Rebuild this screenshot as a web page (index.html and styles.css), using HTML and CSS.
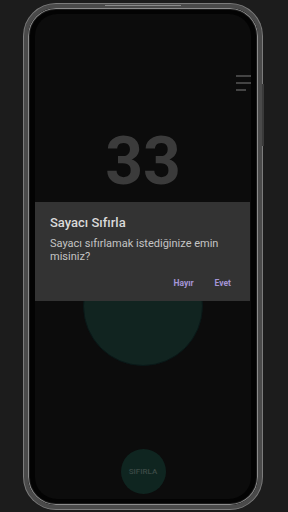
FILE: index.html
```html
<!DOCTYPE html>
<html lang="tr">
<head>
<meta charset="utf-8">
<title>Sayaç</title>
<link rel="stylesheet" href="styles.css">
</head>
<body>
<div class="stage">
  <div class="phone">
    <div class="speaker"></div>
    <div class="side-button"></div>
    <div class="screen">
      <div class="topbar">
        <div class="menu">
          <span class="bar"></span>
          <span class="bar"></span>
          <span class="bar short"></span>
        </div>
      </div>
      <div class="count">33</div>
      <div class="tap-area"><div class="tap"></div></div>
      <div class="reset-area"><div class="reset">SIFIRLA</div></div>

      <div class="dialog">
        <div class="dialog-title">Sayacı Sıfırla</div>
        <div class="dialog-msg">Sayacı sıfırlamak istediğinize emin misiniz?</div>
        <div class="dialog-actions">
          <span class="btn">Hayır</span>
          <span class="btn">Evet</span>
        </div>
      </div>
    </div>
  </div>
</div>
</body>
</html>
```

FILE: styles.css
```css
html, body {
  margin: 0;
  padding: 0;
}
body {
  width: 288px;
  height: 512px;
  overflow: hidden;
  background: #1c1c1c;
  font-family: Roboto, "Noto Sans", sans-serif;
}
.stage {
  padding: 4px 0 0 24px;
}
.phone {
  position: relative;
  box-sizing: border-box;
  width: 238px;
  height: 505px;
  border-radius: 32px;
  border: 4px solid #4a4a4a;
  background: #030303;
  box-shadow: 0 0 0 1px #7c7c7c, inset 0 0 0 1px #8c8c8c, inset 0 0 0 2px #1a1a1a;
  padding: 6px 7px 6px 7px;
}
.speaker {
  position: absolute;
  top: -3px;
  left: 77px;
  width: 76px;
  height: 1px;
  background: #8a8a8a;
}
.side-button {
  position: absolute;
  right: -6px;
  top: 76px;
  width: 2px;
  height: 62px;
  background: #3a3a3a;
}
.screen {
  position: relative;
  box-sizing: border-box;
  width: 216px;
  height: 485px;
  background: #0c0c0c;
  border-radius: 22px;
  overflow: hidden;
  display: flex;
  flex-direction: column;
  align-items: center;
}
.topbar {
  align-self: stretch;
  display: flex;
  justify-content: flex-end;
  padding-top: 61px;
}
.menu {
  display: flex;
  flex-direction: column;
  align-items: flex-start;
  gap: 5px;
  width: 15px;
}
.bar {
  display: block;
  width: 15px;
  height: 2px;
  background: #444444;
}
.bar.short {
  width: 10px;
}
.count {
  margin-top: 38px;
  font-size: 66px;
  font-weight: 700;
  line-height: 66px;
  color: #3b3b3b;
  letter-spacing: 0;
}
.tap-area {
  margin-top: 51px;
}
.tap {
  width: 118px;
  height: 118px;
  border-radius: 50%;
  background: #112420;
  border: 1px solid #0a1818;
}
.reset-area {
  margin-top: 83px;
}
.reset {
  width: 45px;
  height: 45px;
  border-radius: 50%;
  background: #0f2520;
  display: flex;
  align-items: center;
  justify-content: center;
  font-size: 8px;
  font-weight: 500;
  color: #3c4a46;
}
.dialog {
  position: absolute;
  left: 0;
  top: 188px;
  width: 215px;
  height: 99px;
  box-sizing: border-box;
  background: #333333;
  padding: 13px 15px 0 15px;
  display: flex;
  flex-direction: column;
}
.dialog-title {
  font-size: 13px;
  font-weight: 500;
  line-height: 16px;
  color: #dadada;
}
.dialog-msg {
  margin-top: 6px;
  font-size: 11px;
  line-height: 13px;
  color: #c4c4c4;
  width: 170px;
}
.dialog-actions {
  margin-top: 15px;
  display: flex;
  justify-content: flex-end;
  gap: 21px;
  padding-right: 4px;
}
.btn {
  font-size: 8.5px;
  font-weight: 700;
  color: #a494d6;
}
```
